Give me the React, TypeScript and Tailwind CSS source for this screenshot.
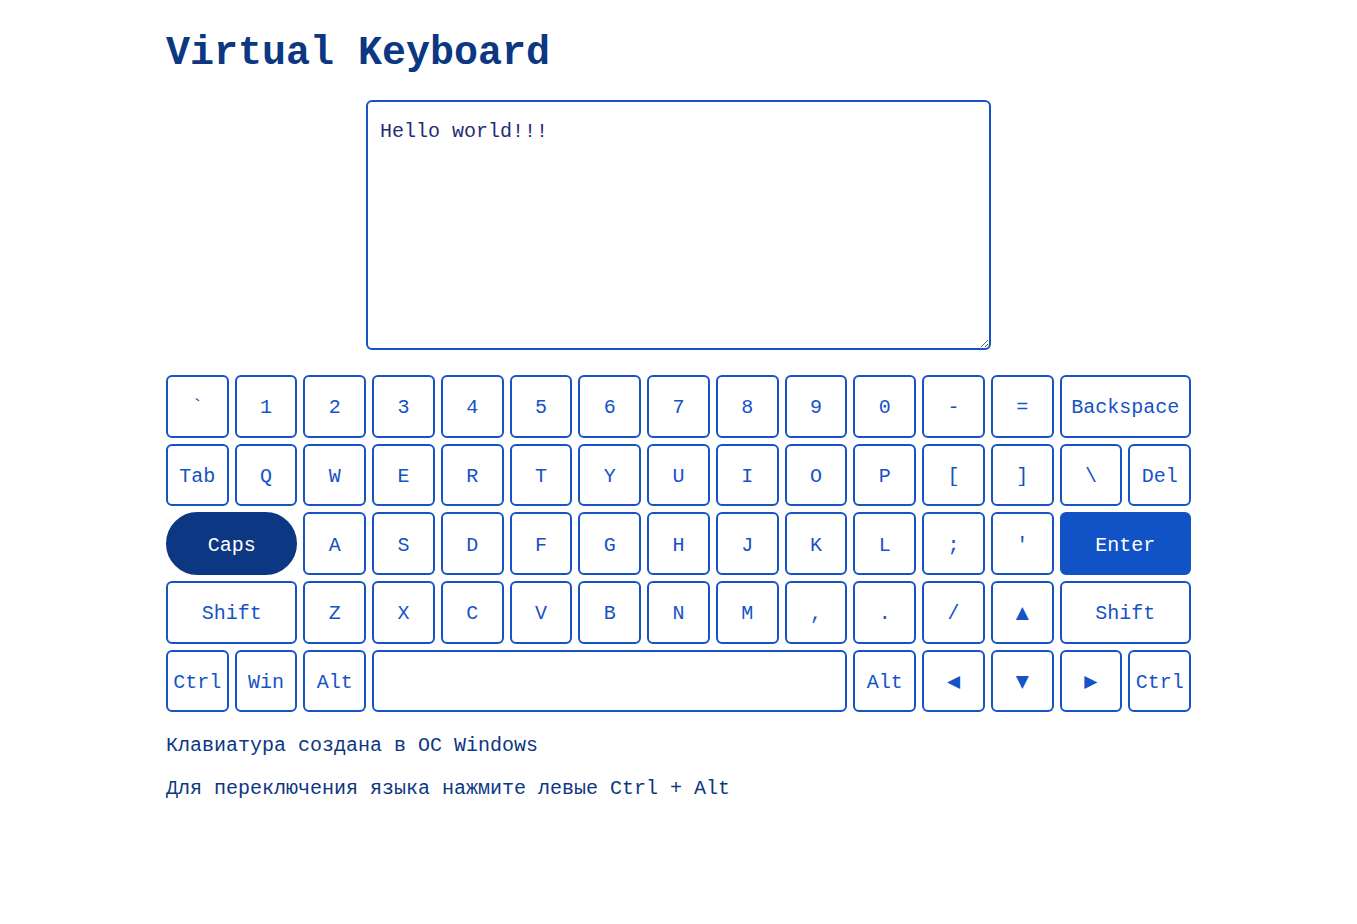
import React from 'react'

type KeyDef = {
  label: string
  span?: number
  variant?: 'caps' | 'enter'
  small?: boolean
}

const rows: KeyDef[][] = [
  [
    { label: '`' }, { label: '1' }, { label: '2' }, { label: '3' }, { label: '4' }, { label: '5' },
    { label: '6' }, { label: '7' }, { label: '8' }, { label: '9' }, { label: '0' }, { label: '-' },
    { label: '=' }, { label: 'Backspace', span: 2 },
  ],
  [
    { label: 'Tab' }, { label: 'Q' }, { label: 'W' }, { label: 'E' }, { label: 'R' }, { label: 'T' },
    { label: 'Y' }, { label: 'U' }, { label: 'I' }, { label: 'O' }, { label: 'P' }, { label: '[' },
    { label: ']' }, { label: '\\' }, { label: 'Del' },
  ],
  [
    { label: 'Caps', span: 2, variant: 'caps' }, { label: 'A' }, { label: 'S' }, { label: 'D' },
    { label: 'F' }, { label: 'G' }, { label: 'H' }, { label: 'J' }, { label: 'K' }, { label: 'L' },
    { label: ';' }, { label: "'" }, { label: 'Enter', span: 2, variant: 'enter' },
  ],
  [
    { label: 'Shift', span: 2 }, { label: 'Z' }, { label: 'X' }, { label: 'C' }, { label: 'V' },
    { label: 'B' }, { label: 'N' }, { label: 'M' }, { label: ',' }, { label: '.' }, { label: '/' },
    { label: '▲', small: true }, { label: 'Shift', span: 2 },
  ],
  [
    { label: 'Ctrl' }, { label: 'Win' }, { label: 'Alt' }, { label: '', span: 7 }, { label: 'Alt' },
    { label: '◀', small: true }, { label: '▼', small: true }, { label: '▶', small: true }, { label: 'Ctrl' },
  ],
]

const spanClass: Record<number, string> = {
  1: 'col-span-1',
  2: 'col-span-2',
  7: 'col-span-7',
}

function Key({ k }: { k: KeyDef }) {
  const base = 'flex items-center justify-center border-2 text-[20px] leading-none select-none pt-[4px]'
  let look = 'border-[#1553c7] bg-white text-[#1553c7] rounded-[6px]'
  if (k.variant === 'caps') look = 'border-[#0c3782] bg-[#0c3782] text-white rounded-full'
  if (k.variant === 'enter') look = 'border-[#1152c6] bg-[#1152c6] text-white rounded-[6px]'
  return (
    <div className={`${base} ${look} ${spanClass[k.span ?? 1]}`}>
      <span className={k.small ? 'text-[17px] -mt-[4px] font-["DejaVu_Sans",sans-serif]' : ''}>{k.label}</span>
    </div>
  )
}

export default function App() {
  return (
    <div className="min-h-screen bg-white font-['Liberation_Mono','DejaVu_Sans_Mono',monospace]">
      <div className="mx-auto w-[1025px] pt-[30px]">
        <h1 className="text-[40px] leading-[48px] font-bold text-[#0c3782]">Virtual Keyboard</h1>

        <div className="mt-[22px] flex justify-center">
          <textarea
            className="w-[625px] h-[250px] border-2 border-[#1553c7] rounded-[6px] px-[12px] pt-[16px] pb-[12px] text-[20px] leading-[28px] text-[#1f2d78] outline-none"
            defaultValue="Hello world!!!"
          />
        </div>

        <div className="mt-[25px] grid grid-cols-[repeat(15,minmax(0,1fr))] auto-rows-[62.7px] gap-[6px]">
          {rows.flat().map((k, i) => (
            <Key key={i} k={k} />
          ))}
        </div>

        <p className="mt-[20px] text-[20px] leading-[28px] text-[#0c3782]">Клавиатура создана в ОС Windows</p>
        <p className="mt-[15px] text-[20px] leading-[28px] text-[#0c3782]">Для переключения языка нажмите левые Ctrl + Alt</p>
      </div>
    </div>
  )
}
